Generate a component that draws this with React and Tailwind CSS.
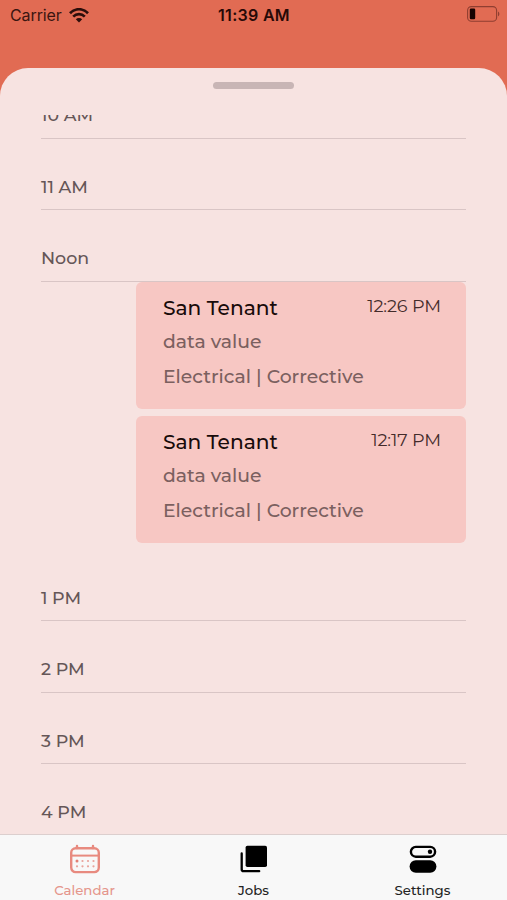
import { clsx } from 'clsx';

const morning = ['10 AM', '11 AM', 'Noon'];
const afternoon = ['1 PM', '2 PM', '3 PM', '4 PM'];

const jobs = [
  { id: 1, tenant: 'San Tenant', value: 'data value', type: 'Electrical | Corrective', time: '12:26 PM' },
  { id: 2, tenant: 'San Tenant', value: 'data value', type: 'Electrical | Corrective', time: '12:17 PM' },
];

function WifiIcon() {
  return (
    <svg width="20" height="15" viewBox="0 0 20 15" fill="none" stroke="#2b0e0b" strokeWidth="2.7">
      <path d="M1 5.2C6 -0.1 14 -0.1 19 5.2" />
      <path d="M4.2 8.6C7.5 5.3 12.5 5.3 15.8 8.6" />
      <path d="M10 14.6L6.8 11.3C8.5 9.7 11.5 9.7 13.2 11.3Z" fill="#2b0e0b" stroke="none" />
    </svg>
  );
}

function BatteryIcon() {
  return (
    <svg width="33" height="16" viewBox="0 0 33 16" fill="none">
      <rect x="0.6" y="0.6" width="29" height="14.6" rx="3.8" stroke="#8f3e31" strokeWidth="1.1" />
      <rect x="2.8" y="2.6" width="5.4" height="10.6" rx="1.2" fill="#170302" />
      <path d="M31 5.5C32.8 6.2 32.8 9.6 31 10.3Z" fill="#8f3e31" />
    </svg>
  );
}

function CalendarIcon() {
  return (
    <svg width="32" height="30" viewBox="0 0 32 30" fill="none" stroke="#e88a7f" strokeWidth="2.4">
      <rect x="2.2" y="4.2" width="27.6" height="23.9" rx="4.5" />
      <path d="M2.2 11.6H29.8" strokeWidth="2" />
      <path d="M8 2V4M24 2V4" strokeLinecap="round" />
      <g fill="#e9a29a" stroke="none">
        <circle cx="8" cy="17" r="1.5" fill="#e27f74" />
        <circle cx="13.5" cy="17" r="1.1" />
        <circle cx="19" cy="17" r="1.1" />
        <circle cx="24.5" cy="17" r="1.1" />
        <circle cx="8" cy="22.3" r="1.1" />
        <circle cx="13.5" cy="22.3" r="1.1" />
        <circle cx="19" cy="22.3" r="1.1" />
        <circle cx="24.5" cy="22.3" r="1.1" />
      </g>
    </svg>
  );
}

function JobsIcon() {
  return (
    <svg width="28" height="28" viewBox="0 0 28 28" fill="none">
      <rect x="5.6" y="0.8" width="21.4" height="21.2" rx="1.8" fill="#000" />
      <path d="M1.7 8.5V24.2Q1.7 26.2 3.7 26.2H19.2" stroke="#000" strokeWidth="2.3" strokeLinecap="round" />
    </svg>
  );
}

function SettingsIcon() {
  return (
    <svg width="28" height="28" viewBox="0 0 28 28" fill="none">
      <rect x="1.9" y="1.9" width="24.2" height="9.8" rx="4.9" stroke="#000" strokeWidth="2.4" />
      <circle cx="21" cy="6.8" r="2.2" fill="#000" />
      <rect x="0.6" y="15.2" width="26.8" height="12.5" rx="6.2" fill="#000" />
    </svg>
  );
}

const tabs = [
  { label: 'Calendar', icon: CalendarIcon, color: 'text-[#e5968c]' },
  { label: 'Jobs', icon: JobsIcon, color: 'text-[#222222]' },
  { label: 'Settings', icon: SettingsIcon, color: 'text-[#222222]' },
];

function HourRow({ label }) {
  return (
    <div className="flex h-[71.5px] shrink-0 items-end border-b border-[#d9c5c5] pb-[12.5px]">
      <span className="text-[17.4px] leading-5 font-medium text-[#655657]">{label}</span>
    </div>
  );
}

function JobCard({ job }) {
  return (
    <div className="flex h-[127px] justify-between rounded-md bg-[#f7c7c3] pt-[9px] pr-[25px] pl-[27px]">
      <div className="flex flex-col text-[18.8px] leading-[34.5px] font-medium whitespace-nowrap text-[#7b605f]">
        <p className="text-[20.2px] text-[#180b0a]">{job.tenant}</p>
        <p>{job.value}</p>
        <p>{job.type}</p>
      </div>
      <p className="text-[17.6px] leading-[30px] tracking-[-0.1px] text-[#432b2a]">{job.time}</p>
    </div>
  );
}

function App() {
  return (
    <div className="flex h-[900px] w-full flex-col overflow-hidden bg-[#e16b53] font-['Montserrat','Inter',sans-serif]">
      <header className="grid h-[68px] shrink-0 grid-cols-3 items-start pt-[5px] pr-[7px] pl-[10px] font-['Inter',sans-serif] text-[16px] leading-5 text-[#3b1510]">
        <div className="flex items-center gap-[7px]">
          <span className="tracking-[-0.1px]">Carrier</span>
          <WifiIcon />
        </div>
        <span className="-ml-[2px] text-center font-semibold tracking-[0.3px] text-[#260907]">11:39 AM</span>
        <div className="flex justify-end pt-px">
          <BatteryIcon />
        </div>
      </header>

      <main className="flex min-h-0 flex-1 flex-col rounded-t-[28px] bg-[#f7e3e1]">
        <div className="flex h-[47px] shrink-0 justify-center pt-[13.5px]">
          <div className="h-[7px] w-[81px] rounded-full bg-[#c8b5b5]" />
        </div>
        <div className="flex min-h-0 flex-1 flex-col overflow-hidden px-[41px]">
          <div className="-mt-[48px] flex flex-col">
            {morning.map((label) => (
              <HourRow key={label} label={label} />
            ))}
            <div className="flex h-[268px] flex-col gap-[7px] pl-[95px]">
              {jobs.map((job) => (
                <JobCard key={job.id} job={job} />
              ))}
            </div>
            {afternoon.map((label) => (
              <HourRow key={label} label={label} />
            ))}
          </div>
        </div>
      </main>

      <nav className="grid h-[66px] shrink-0 grid-cols-3 border-t border-[#dccfce] bg-[#f8f8f8]">
        {tabs.map(({ label, icon: Icon, color }) => (
          <div key={label} className="flex flex-col items-center">
            <div className="flex h-[47px] items-center pt-px">
              <Icon />
            </div>
            <span className={clsx('text-[13.3px] leading-4 font-medium', color)}>{label}</span>
          </div>
        ))}
      </nav>
    </div>
  );
}

export default App;
